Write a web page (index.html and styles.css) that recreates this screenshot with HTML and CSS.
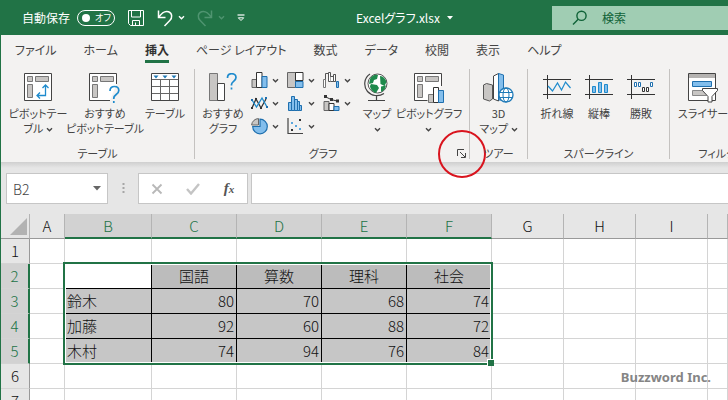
FILE: index.html
```html
<!DOCTYPE html>
<html lang="ja">
<head>
    <meta charset="UTF-8">
    <meta name="viewport" content="width=device-width, initial-scale=1.0">
    <title>Excelグラフ.xlsx</title>
    <link rel="stylesheet" href="styles.css">
</head>
<body>
    <!-- Shared chevron -->
    <svg class="defs" width="0" height="0" aria-hidden="true">
        <symbol id="chev" viewBox="0 0 7 7"><path d="M1 2.2l2.5 2.5L6 2.2" fill="none" stroke="currentColor" stroke-width="1.4"/></symbol>
    </svg>

    <div class="app">
        <header class="titlebar">
            <div class="quick">
                <label class="autosave">
                    <span>自動保存</span>
                    <span class="switch"><input type="checkbox"><span>オフ</span></span>
                </label>
                <button class="quick-btn save" aria-label="保存">
                    <svg width="18" height="18" viewBox="0 0 18 18" fill="none" stroke="currentColor"><path d="M1.5 1.5h15v15h-13l-2-2zM4.500 1.500v6.500h9v-6.500M5.500 16.500v-5h7v5M8.500 16.500v-3"/></svg>
                </button>
                <button class="quick-btn" aria-label="元に戻す">
                    <svg width="17" height="18" viewBox="0 0 17 18" fill="none" stroke="currentColor" stroke-width="1.5"><path d="M1.500 1.500v7h7M1.800 8.200C5 3.500 8.500 1.800 11.500 2.800c4 1.500 4 6 1.300 8.700L7.500 17"/></svg>
                </button>
                <button class="quick-btn arrow" aria-label="元に戻すの履歴"><svg width="7" height="7"><use href="#chev"/></svg></button>
                <button class="quick-btn redo" aria-label="やり直し" disabled>
                    <svg width="17" height="18" viewBox="0 0 17 18" fill="none" stroke="currentColor" stroke-width="1.500"><path d="M14.500 1.500v7h-7M14.200 8.200C11 3.500 7.500 1.800 4.500 2.800c-4 1.500-4 6-1.300 8.700L8.500 17"/></svg>
                </button>
                <button class="quick-btn arrow" aria-label="やり直しの履歴" disabled><svg width="7" height="7"><use href="#chev"/></svg></button>
                <button class="quick-btn custom" aria-label="クイック アクセス ツール バーのユーザー設定">
                    <svg width="8" height="8" viewBox="0 0 8 8"><path d="M.5 1h7" stroke="currentColor" stroke-width="1.200"/><path d="M1.300 3.800L4 6.500l2.700-2.700z" fill="none" stroke="currentColor"/></svg>
                </button>
            </div>
            <button class="filename">Excelグラフ.xlsx <svg width="6" height="4" viewBox="0 0 6 4"><path d="M0 0h6L3 3.500z" fill="currentColor"/></svg></button>
            <label class="search">
                <svg width="16" height="16" viewBox="0 0 16 16" fill="none" stroke="currentColor" stroke-width="1.400"><circle cx="9.500" cy="5.800" r="4.600"/><path d="M6.200 9.200L1 14.500"/></svg>
                <input type="search" placeholder="検索" aria-label="検索">
            </label>
        </header>

        <nav class="tabs">
            <a href="#">ファイル</a>
            <a href="#">ホーム</a>
            <a href="#" class="active">挿入</a>
            <a href="#">ページ レイアウト</a>
            <a href="#">数式</a>
            <a href="#">データ</a>
            <a href="#">校閲</a>
            <a href="#">表示</a>
            <a href="#">ヘルプ</a>
        </nav>

        <div class="ribbon">
            <section class="group group-table">
                <div class="tools">
                    <button class="tool">
                        <svg width="28" height="28" viewBox="0 0 28 28" fill="none"><path d="M.5.5h27v27H.5z" fill="#fff" stroke="#444"/><path d="M3.500 3.500h5v5h-5zM11.500 3.500h13v5h-13zM3.500 11.500h5v13h-5z" fill="#c8c6c4" stroke="#777"/><path d="M13 22.500h8.500v-10M16 19.500l-3 3 3 3M18.500 15l3-3 3 3" stroke="#1e8bcd" stroke-width="1.300"/></svg>
                        <span>ピボットテー<br>ブル <svg width="7" height="7"><use href="#chev"/></svg></span>
                    </button>
                    <button class="tool tool-wide">
                        <svg class="pushed" width="32" height="30" viewBox="0 0 32 30" fill="none"><path d="M21 27.500H.5V.5h27V11" fill="#fff" stroke="#444"/><path d="M3.500 3.500h5v5h-5zM11.500 3.500h13v5h-13zM3.500 11.500h5v13h-5z" fill="#c8c6c4" stroke="#777"/><path d="M21 18c0-3 2-4.500 4.500-4.500s4.300 1.700 4.300 4c0 4-5 4-5 7.500v1M24.800 28v2" stroke="#1e8bcd" stroke-width="1.700"/></svg>
                        <span>おすすめ<br>ピボットテーブル</span>
                    </button>
                    <button class="tool">
                        <svg width="28" height="28" viewBox="0 0 28 28" fill="none"><path d="M.5.5h27v27H.5z" fill="#fff" stroke="#444"/><path d="M1 6.500h26M1 13.500h26M1 20.500h26M9.500 6v21M18.500 6v21" stroke="#666"/><path d="M2.500 2.500h5L5 5.500zM11.500 2.500h5l-2.500 3zM20.500 2.500h5l-2.500 3z" fill="#1e78b4"/></svg>
                        <span>テーブル</span>
                    </button>
                </div>
                <h2>テーブル</h2>
            </section>

            <section class="group group-chart">
                <div class="tools">
                    <button class="tool">
                        <svg width="28" height="28" viewBox="0 0 28 28" fill="none"><path d="M.5.5h8v27h-8z" fill="#c8c6c4" stroke="#777"/><path d="M8.500 10.500h7v17h-7z" fill="#fff" stroke="#444"/><path d="M18.500 5c0-3 2-4.300 4.300-4.300S27 2.200 27 4.500c0 3.800-4.500 3.800-4.500 7v1M22.500 14.500v2" stroke="#1e8bcd" stroke-width="1.700"/></svg>
                        <span>おすすめ<br>グラフ</span>
                    </button>
                    <div class="charts">
                        <button aria-label="縦棒"><svg width="17" height="17" viewBox="0 0 17 17"><path d="M1 7.500h4.500v8H1z" fill="#c8c6c4" stroke="#666"/><path d="M5.500.5H11v15H5.500z" fill="#fff" stroke="#333"/><path d="M11 4.500h5v11h-5z" fill="#83beec" stroke="#1e6fae"/></svg><svg width="7" height="7"><use href="#chev"/></svg></button>
                        <button aria-label="階層構造"><svg width="17" height="17" viewBox="0 0 17 17"><path d="M.5.5h8v15h-8z" fill="#c8c6c4" stroke="#666"/><path d="M8.500.5H16v8H8.500z" fill="#fff" stroke="#333"/><path d="M8.500 9.500H16v6H8.500z" fill="#83beec" stroke="#1e6fae"/></svg><svg width="7" height="7"><use href="#chev"/></svg></button>
                        <button aria-label="ウォーターフォール"><svg width="17" height="17" viewBox="0 0 17 17" fill="none"><path d="M.5 7.500h2v8h-2z" fill="#fff" stroke="#777"/><path d="M2.500 7.500v-6h3v6" stroke="#555"/><path d="M5.500.5h2v9h-2z" fill="#fff" stroke="#555"/><path d="M7.500 4.500h3v5h-3M10.500 2.500h2v7h-2z" fill="#fff" stroke="#555"/><path d="M12.500 2.500v7" stroke="#555"/><path d="M13.500 9.500h2v6h-2z" fill="#83beec" stroke="#1e6fae"/></svg><svg width="7" height="7"><use href="#chev"/></svg></button>
                        <button aria-label="折れ線"><svg width="17" height="17" viewBox="0 0 17 17" fill="none"><path d="M1 13l4-9 5 9 5-9" stroke="#333" stroke-width="1.300"/><path d="M1 5l4.500 7L11 3l5 9" stroke="#1e8bcd" stroke-width="1.300"/><path d="M0 12h2v2H0zM4 3h2v2H4zM9 12h2v2H9z" fill="#333"/><path d="M14 2h2v2h-2zM15 11h2v2h-2zM0 4h2v2H0z" fill="#1e6fae"/></svg><svg width="7" height="7"><use href="#chev"/></svg></button>
                        <button aria-label="統計"><svg width="17" height="17" viewBox="0 0 17 17" fill="#83beec" stroke="#1e6fae"><path d="M1.500 7.500h3v8h-3zM4.500 1.500h3v14h-3zM7.500 4.500h3v11h-3zM10.500 6.500h2v9h-2zM12.500 10.500h2v5h-2z"/></svg><svg width="7" height="7"><use href="#chev"/></svg></button>
                        <button aria-label="組み合わせ"><svg width="17" height="17" viewBox="0 0 17 17"><path d="M1 6.500h5v9H1z" fill="#c8c6c4" stroke="#666"/><path d="M6 8.500h5v7H6z" fill="#fff" stroke="#333"/><path d="M11 11.500h5v4h-5z" fill="#83beec" stroke="#1e6fae"/><path d="M2 1.500l6 3 6 1.500" fill="none" stroke="#333"/><path d="M1 0h3v3H1zM7 3h3v3H7zM13 4.500h3v3h-3z" fill="#333"/></svg><svg width="7" height="7"><use href="#chev"/></svg></button>
                        <button aria-label="円"><svg width="17" height="17" viewBox="0 0 17 17"><path d="M9 1.200A7.300 7.300 0 1 1 1.700 8.500H9z" fill="#83beec" stroke="#1e6fae" stroke-width="1.200"/><path d="M7.500 7H.6A7 7 0 0 1 7.500.6z" fill="#c8c6c4" stroke="#666"/></svg><svg width="7" height="7"><use href="#chev"/></svg></button>
                        <button aria-label="散布図"><svg width="17" height="17" viewBox="0 0 17 17"><path d="M1 0v15.500h15" fill="none" stroke="#444" stroke-width="1.200"/><path d="M12 1h2v2h-2zM4 11h2v2H4z" fill="#333"/><path d="M4 4h2v2H4zM8 7h2v2H8zM12 10h2v2h-2z" fill="#5aa7dd"/></svg><svg width="7" height="7"><use href="#chev"/></svg></button>
                    </div>
                    <button class="tool tool-map">
                        <svg width="28" height="28" viewBox="0 0 28 28" fill="none"><circle cx="14.500" cy="10.500" r="9.500" fill="#fff" stroke="#555"/><path d="M7 6c2-4 5-4.500 8-4l-1 4-3 1-1 3-4 1zM17 3c4 .5 6 4 6.500 6l-2 4-4-2zM8 11l6 1 2 3-3 5c-4-1-6-5-6-7zM18 13.500l5-1c-.5 3.500-2.500 5.500-5 6.500z" fill="#1e8a4c"/><path d="M7 1C.5 5 .5 14 4.500 18.500c4 4.500 11 5.500 16.500 2M13.500 23v4M5 27.500h17" stroke="#444" stroke-width="1.200"/></svg>
                        <span>マップ<br><svg width="7" height="7"><use href="#chev"/></svg></span>
                    </button>
                    <button class="tool tool-pivot">
                        <svg class="pushed" width="31" height="30" viewBox="0 0 31 30" fill="none"><path d="M13.500 27.500H.5V.5h27V13" fill="#fff" stroke="#444"/><path d="M3.500 3.500h5v5h-5zM11.500 3.500h13v5h-13zM3.500 11.500h5v13h-5z" fill="#c8c6c4" stroke="#777"/><path d="M14.500 21.500h5v8h-5z" fill="#c8c6c4" stroke="#777"/><path d="M19.500 14.500h5v15h-5z" fill="#fff" stroke="#333"/><path d="M24.500 17.500h5v12h-5z" fill="#83beec" stroke="#1e6fae"/></svg>
                        <span>ピボットグラフ<br><svg width="7" height="7"><use href="#chev"/></svg></span>
                    </button>
                </div>
                <h2>グラフ</h2>
                <button class="launcher" aria-label="グラフの挿入">
                    <svg width="9" height="9" viewBox="0 0 9 9" fill="none" stroke="#444"><path d="M.5 7V.5H7M3 3l5 5M8.500 4v4.500H4"/></svg>
                    <span class="callout"></span>
                </button>
            </section>

            <section class="group group-tour">
                <div class="tools">
                    <button class="tool">
                        <svg class="pushed" width="31" height="30" viewBox="0 0 31 30" fill="none"><path d="M.5 12l3-1.500 6 1.500v14l-3 2-6-2z" fill="#c8c6c4" stroke="#555"/><path d="M10.500 3l5-2.500V28l-5-2z" fill="#fff" stroke="#444"/><path d="M15.500.5l5 1.500v25h-5z" fill="#83beec" stroke="#1e6fae"/><circle cx="23" cy="22" r="7" fill="#fff" stroke="#1e7ab8" stroke-width="1.300"/><ellipse cx="23" cy="22" rx="3" ry="7" stroke="#1e7ab8"/><path d="M16.500 19.500h13M16.500 24.500h13" stroke="#1e7ab8"/></svg>
                        <span>3D<br>マップ <svg width="7" height="7"><use href="#chev"/></svg></span>
                    </button>
                </div>
                <h2>ツアー</h2>
            </section>

            <section class="group group-spark">
                <div class="tools">
                    <button class="tool">
                        <svg width="28" height="28" viewBox="0 0 28 28" fill="none"><path d="M0 6.500h28M0 21.500h28M4.500 2v24" stroke="#333"/><path d="M5 13l4.500 5 5-8 4 7 4-8 5 6" stroke="#1e8bcd" stroke-width="1.200"/></svg>
                        <span>折れ線</span>
                    </button>
                    <button class="tool">
                        <svg width="28" height="28" viewBox="0 0 28 28" fill="none"><path d="M0 6.500h28M0 21.500h28M4.500 2v24" stroke="#333"/><path d="M7.500 13.500h3v6h-3zM13.500 9.500h3v10h-3zM19.500 11.500h3v8h-3z" fill="#83beec" stroke="#1e8bcd"/></svg>
                        <span>縦棒</span>
                    </button>
                    <button class="tool">
                        <svg width="28" height="28" viewBox="0 0 28 28" fill="none"><path d="M0 6.500h28M0 21.500h28M4.500 2v24" stroke="#333"/><path d="M7.500 9.500h2v4h-2zM11.500 9.500h2v4h-2zM23.500 9.500h2v4h-2z" fill="#fff" stroke="#1e6fae"/><path d="M15.500 14.500h2v4h-2zM19.500 14.500h2v4h-2z" fill="#fff" stroke="#333"/></svg>
                        <span>勝敗</span>
                    </button>
                </div>
                <h2>スパークライン</h2>
            </section>

            <section class="group group-filter">
                <div class="tools">
                    <button class="tool">
                        <svg class="pushed" width="30" height="30" viewBox="0 0 30 30" fill="none"><path d="M.5.5h27v27H.5z" fill="#fff" stroke="#444"/><path d="M1 1h26v4H1z" fill="#b5b3b1"/><path d="M4.500 8.500h19v5h-19z" fill="#83beec" stroke="#1e6fae"/><path d="M4.500 17.500h14v5h-14z" fill="#c8c6c4" stroke="#888"/><path d="M14.500 15.500h15v2l-5.500 6V29h-4v-5.500l-5.500-6z" fill="#fff" stroke="#444"/></svg>
                        <span>スライサー</span>
                    </button>
                </div>
                <h2>フィルター</h2>
            </section>
        </div>

        <div class="formula-bar">
            <div class="namebox">
                <input type="text" value="B2" aria-label="名前ボックス">
                <button aria-label="名前の一覧"><svg width="8" height="5" viewBox="0 0 8 5"><path d="M0 0h8L4 4.500z" fill="#666"/></svg></button>
            </div>
            <svg class="grip" width="3" height="11" viewBox="0 0 3 11"><path d="M.5 0h2v2h-2zM.5 4h2v2h-2zM.5 8h2v2h-2z" fill="#a6a6a6"/></svg>
            <div class="entry">
                <button aria-label="キャンセル"><svg width="12" height="12" viewBox="0 0 12 12"><path d="M1.500 1.500l9 9M10.500 1.500l-9 9" stroke="#b8b8b8" stroke-width="1.800"/></svg></button>
                <button aria-label="入力"><svg width="14" height="12" viewBox="0 0 14 12"><path d="M1 6l4 4.500L13 1" fill="none" stroke="#c4c4c4" stroke-width="2.400"/></svg></button>
                <button class="fx" aria-label="関数の挿入"><span>f<sub>x</sub></span></button>
            </div>
            <input class="formula" type="text" aria-label="数式バー">
        </div>

        <main class="sheet">
            <table>
                <colgroup>
                    <col class="c-head"><col class="c-a"><col class="c-b">
                    <col class="c-data"><col class="c-data"><col class="c-data"><col class="c-data">
                    <col class="c-std"><col class="c-std"><col class="c-std"><col>
                </colgroup>
                <thead>
                    <tr>
                        <th class="corner"><svg width="17" height="17" viewBox="0 0 17 17"><path d="M17 0v17H0z" fill="#b2b2b2"/></svg></th>
                        <th>A</th>
                        <th class="on">B</th>
                        <th class="on">C</th>
                        <th class="on">D</th>
                        <th class="on">E</th>
                        <th class="on">F</th>
                        <th>G</th>
                        <th>H</th>
                        <th>I</th>
                        <th></th>
                    </tr>
                </thead>
                <tbody>
                    <tr><th>1</th><td></td><td></td><td></td><td></td><td></td><td></td><td></td><td></td><td></td><td></td></tr>
                    <tr><th class="on">2</th><td></td><td class="cell current"></td><td class="cell head">国語</td><td class="cell head">算数</td><td class="cell head">理科</td><td class="cell head">社会</td><td></td><td></td><td></td><td></td></tr>
                    <tr><th class="on">3</th><td></td><td class="cell name">鈴木</td><td class="cell">80</td><td class="cell">70</td><td class="cell">68</td><td class="cell">74</td><td></td><td></td><td></td><td></td></tr>
                    <tr><th class="on">4</th><td></td><td class="cell name">加藤</td><td class="cell">92</td><td class="cell">60</td><td class="cell">88</td><td class="cell">72</td><td></td><td></td><td></td><td></td></tr>
                    <tr><th class="on">5</th><td></td><td class="cell name">木村</td><td class="cell">74</td><td class="cell">94</td><td class="cell">76</td><td class="cell">84</td><td></td><td></td><td></td><td></td></tr>
                    <tr><th>6</th><td></td><td></td><td></td><td></td><td></td><td></td><td></td><td></td><td></td><td></td></tr>
                    <tr><th>7</th><td></td><td></td><td></td><td></td><td></td><td></td><td></td><td></td><td></td><td></td></tr>
                </tbody>
            </table>
            <div class="selection"></div>
            <p class="credit">Buzzword Inc.</p>
        </main>
    </div>
</body>
</html>
```

FILE: styles.css
```css
* {
    box-sizing: border-box;
}

body {
    margin: 0;
    overflow: hidden;
    font-family: "Noto Sans CJK JP", sans-serif;
    font-size: 12px;
    font-feature-settings: "palt";
    color: #444;
}

button,
input {
    padding: 0;
    border: none;
    background: none;
    font: inherit;
    font-feature-settings: inherit;
    color: inherit;
}

button {
    display: flex;
    align-items: center;
    justify-content: center;
}

svg {
    flex: none;
}

.defs {
    position: absolute;
}

.app {
    display: flex;
    flex-direction: column;
    height: 100vh;
    border-left: 1px solid #217346;
    background: #e6e6e6;
}

/* Title bar */
.titlebar {
    display: flex;
    flex: none;
    align-items: center;
    height: 35px;
    background: #217346;
    color: #fff;
}

.quick {
    display: flex;
    align-items: center;
    flex: 0 0 355px;
    padding-left: 21px;
}

.autosave {
    display: flex;
    align-items: center;
    gap: 7px;
    margin-right: 12px;
}

.switch {
    display: flex;
    align-items: center;
    gap: 5px;
    width: 38px;
    height: 16px;
    padding-left: 4px;
    border: 1px solid #fff;
    border-radius: 8px;
    font-size: 9px;
}

.switch input {
    appearance: none;
    width: 8px;
    height: 8px;
    margin: 0;
    border-radius: 50%;
    background: #fff;
}

.save {
    margin-right: 12px;
}

.arrow {
    margin: 0 12px 0 4px;
}

.quick-btn:disabled {
    color: #4f9470;
}

.filename {
    gap: 7px;
    font-size: 12px;
}

.search {
    display: flex;
    align-items: center;
    gap: 14px;
    width: 176px;
    height: 24px;
    margin-left: auto;
    padding-left: 20px;
    background: #a0cdb3;
    color: #0f6237;
}

.search input {
    flex: 1;
    min-width: 0;
    outline: none;
}

.search input::placeholder {
    color: #0f6237;
}

/* Tabs */
.tabs {
    display: flex;
    flex: none;
    gap: 27px;
    height: 30px;
    padding-left: 14px;
    background: #f3f2f1;
}

.tabs a {
    height: 28px;
    line-height: 30px;
    color: #444;
    text-decoration: none;
    white-space: nowrap;
}

.tabs .active {
    border-bottom: 3px solid #217346;
    font-weight: bold;
    color: #333;
}

/* Ribbon */
.ribbon {
    position: relative;
    z-index: 1;
    display: flex;
    flex: none;
    height: 97px;
    padding-top: 4px;
    background: #f3f2f1;
    font-size: 11px;
}

.group {
    position: relative;
    display: flex;
    flex-direction: column;
    flex: none;
    height: 90px;
    border-right: 1px solid #c4c2c0;
}

.group h2 {
    margin: auto 0 0;
    font-size: 11px;
    font-weight: normal;
    line-height: 12px;
    text-align: center;
}

.tools {
    display: flex;
    padding-top: 4px;
}

.tool {
    flex-direction: column;
    justify-content: flex-start;
    flex: none;
    line-height: 15px;
    white-space: nowrap;
}

.tool > span {
    margin-top: 5px;
}

.tool > .pushed {
    margin-bottom: -2px;
}

.group-table {
    width: 194px;
}

.group-table .tools {
    padding-left: 6px;
}

.group-table .tool {
    width: 62px;
}

.group-table .tool-wide {
    width: 72px;
}

.group-table .tool:last-child {
    width: 48px;
}

.group-chart {
    width: 275px;
}

.group-chart h2 {
    padding-right: 18px;
}

.group-chart .tool {
    width: 56px;
}

.charts {
    display: grid;
    grid-template-columns: repeat(3, 36px);
    grid-auto-rows: 23px;
    align-content: start;
    margin-top: -4px;
}

.charts button {
    gap: 4px;
    justify-content: flex-start;
}

.group-chart .tool-map {
    width: 36px;
}

.group-chart .tool-pivot {
    width: 68px;
}

.launcher {
    position: absolute;
    right: 3px;
    bottom: 1px;
}

.callout {
    position: absolute;
    top: -19px;
    left: -19px;
    width: 48px;
    height: 48px;
    border: 2px solid #d9141e;
    border-radius: 50%;
}

.group-tour {
    width: 58px;
}

.group-tour .tool {
    width: 57px;
}

.group-spark {
    width: 142px;
}

.group-spark .tools {
    padding-left: 8px;
}

.group-spark .tool {
    width: 42px;
}

.group-filter {
    width: 106px;
}

.group-filter .tool {
    width: 66px;
}

/* Formula bar */
.formula-bar {
    display: flex;
    flex: none;
    align-items: center;
    height: 52px;
    padding: 1px 0 0 5px;
    background: linear-gradient(#cfcfcf, #e6e6e6 6px);
}

.namebox,
.entry,
.formula {
    height: 31px;
    border: 1px solid #c6c6c6;
    background: #fff;
}

.namebox {
    display: flex;
    width: 102px;
    padding: 0 6px;
}

.namebox input {
    flex: 1;
    min-width: 0;
    font-size: 14px;
    font-weight: 300;
}

.grip {
    margin: 0 13px 0 14px;
}

.entry {
    display: flex;
    width: 110px;
    margin-right: 3px;
}

.entry button {
    flex: 1;
}

.entry .fx {
    font: italic bold 15px "Liberation Serif", serif;
    color: #555;
}

.fx sub {
    font-size: 11px;
    line-height: 1;
    vertical-align: baseline;
}

.formula {
    flex: 1;
    min-width: 0;
    border-right: none;
}

/* Sheet */
.sheet {
    position: relative;
    flex: 1;
    min-height: 0;
    overflow: hidden;
}

table {
    width: 100%;
    border-spacing: 0;
    table-layout: fixed;
    font-size: 15px;
    line-height: 20px;
    color: #111;
}

.c-head { width: 29px; }
.c-a { width: 35px; }
.c-b { width: 87px; }
.c-data { width: 85px; }
.c-std { width: 72px; }

th,
td {
    height: 25px;
    padding: 0 2px;
    border-right: 1px solid #d4d4d4;
    border-bottom: 1px solid #d4d4d4;
    font-weight: 300;
    white-space: nowrap;
}

th {
    background: #e6e6e6;
    border-right-color: #b4b4b4;
}

td {
    background: #fff;
}

thead th {
    border-bottom-color: #999;
}

tbody th {
    border-right-color: #999;
}

th.on {
    background: #d2d2d2;
    color: #217346;
}

thead th.on {
    border-bottom: 2px solid #217346;
}

tbody th.on {
    border-right: 2px solid #217346;
}

.corner {
    text-align: right;
}

.corner svg {
    display: block;
    margin-left: auto;
}

.cell {
    border-color: #000;
    background: #c6c6c6;
    text-align: right;
}

.name {
    text-align: left;
}

.head {
    background: #bcbcbc;
    text-align: center;
}

.current {
    background: #fff;
}

/* Range B2:F5 */
.selection {
    position: absolute;
    top: 48px;
    left: 62px;
    width: 430px;
    height: 103px;
    border: 2px solid #217346;
    box-shadow: inset 0 0 0 1px #fff;
}

.selection::after {
    content: "";
    position: absolute;
    right: -3px;
    bottom: -3px;
    width: 6px;
    height: 6px;
    border: solid #fff;
    border-width: 1px 0 0 1px;
    background: #217346;
}

.credit {
    position: absolute;
    right: 17px;
    bottom: 14px;
    margin: 0;
    font: bold 13px/18px "Noto Sans", sans-serif;
    color: #858585;
}
```
